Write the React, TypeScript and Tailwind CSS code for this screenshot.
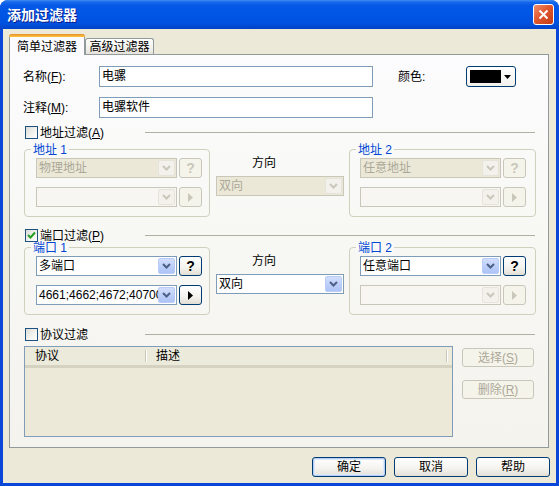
import React from "react";

const font = "font-[family-name:Liberation_Sans,Noto_Sans_CJK_SC,sans-serif]";

const Chevron = ({ color }: { color: string }) => (
  <svg width="9" height="6" viewBox="0 0 9 6">
    <path d="M1 1 L4.5 4.5 L8 1" fill="none" stroke={color} strokeWidth="2" />
  </svg>
);

const Checkbox = ({ checked = false }: { checked?: boolean }) => (
  <div className="w-[13px] h-[13px] shrink-0 border border-[#1C5180] bg-[linear-gradient(135deg,#DCDCD7_0%,#F4F4F0_60%,#FFFFFF_100%)] flex items-center justify-center">
    {checked && (
      <svg width="9" height="9" viewBox="0 0 9 9">
        <path d="M1 4 L3.5 6.5 L8 1.5" fill="none" stroke="#21A121" strokeWidth="2" />
      </svg>
    )}
  </div>
);

const Combo = ({
  text = "",
  state,
  className,
}: {
  text?: string;
  state: "on" | "off" | "offBeige";
  className: string;
}) => {
  const on = state === "on";
  const box = on
    ? "border-[#7F9DB9] bg-white text-black"
    : state === "offBeige"
      ? "border-[#C9C7BA] bg-[#EBE8D7] text-[#ACA899]"
      : "border-[#C9C7BA] bg-[#F7F6F2] text-[#ACA899]";
  return (
    <div className={`h-[20px] shrink-0 border p-px flex items-stretch ${box} ${className}`}>
      <div className="flex-1 min-w-0 overflow-hidden whitespace-nowrap pl-[1px] leading-[16px] text-[12px]">
        {text}
      </div>
      <div
        className={`w-[17px] rounded-[2px] border flex items-center justify-center ${
          on
            ? "border-[#B9CCF8] bg-[linear-gradient(180deg,#D2DEFC_0%,#BACDF9_60%,#AFC4F6_100%)]"
            : "border-[#E6E4DA] bg-[#F2F1EB]"
        }`}
      >
        <Chevron color={on ? "#4D6185" : "#C9C7BA"} />
      </div>
    </div>
  );
};

const SmallBtn = ({ kind, on }: { kind: "q" | "arrow"; on: boolean }) => (
  <div
    className={`ml-[2px] w-[23px] h-[20px] shrink-0 rounded-[3px] border flex items-center justify-center ${
      on
        ? "border-[#003C74] bg-[linear-gradient(180deg,#FFFFFF_0%,#F3F2EE_60%,#E1DED3_100%)]"
        : "border-[#C9C7BA] bg-[#F5F4EA]"
    }`}
  >
    {kind === "q" ? (
      <span className={`text-[14px] font-bold leading-none ${on ? "text-black" : "text-[#C9C7BA]"}`}>?</span>
    ) : (
      <svg width="5" height="9" viewBox="0 0 5 9">
        <path d="M0 0 L5 4.5 L0 9 Z" fill={on ? "#000" : "#C9C7BA"} />
      </svg>
    )}
  </div>
);

const Group = ({
  title,
  className,
  pl,
  children,
}: {
  title: string;
  className: string;
  pl: string;
  children: React.ReactNode;
}) => (
  <div className={`relative h-[68px] shrink-0 rounded-[4px] border border-[#D0D0BF] ${className}`}>
    <span className="absolute left-[6px] -top-[5px] px-[2px] bg-[#F9F9F7] text-[#0046D5] text-[12px] leading-[11px]">
      {title}
    </span>
    <div className={`pt-[8px] ${pl} flex flex-col gap-[9px]`}>{children}</div>
  </div>
);

const CheckRow = ({ label, checked = false, mt }: { label: React.ReactNode; checked?: boolean; mt: string }) => (
  <div className={`${mt} h-[13px] flex items-center pl-[15px]`}>
    <Checkbox checked={checked} />
    <div className="w-[107px] pl-[2px] text-[12px] leading-[12px] whitespace-nowrap">{label}</div>
    <div className="flex-1 mr-[13px] h-px bg-[#B2B0A2]" />
  </div>
);

const DirCol = ({ on }: { on: boolean }) => (
  <div className="ml-[6px] w-[128px] shrink-0 flex flex-col">
    <div className="pt-[7px] pl-[36px] text-[12px] leading-[14px]">方向</div>
    <Combo className="mt-[6px] w-[128px]" text="双向" state={on ? "on" : "offBeige"} />
  </div>
);

const Button = ({ label, def = false }: { label: string; def?: boolean }) => (
  <div
    className={`w-[74px] h-[20px] rounded-[3px] border border-[#003C74] flex items-center justify-center text-[12px] bg-[linear-gradient(180deg,#FFFFFF_0%,#F5F4F0_55%,#E3E0D6_100%)] ${
      def ? "shadow-[inset_0_0_0_1px_#B6CEF4,inset_0_0_0_2px_#DDE8FA]" : ""
    }`}
  >
    {label}
  </div>
);

const DisabledBtn = ({ children, mt }: { children: React.ReactNode; mt: string }) => (
  <div
    className={`${mt} w-[72px] h-[19px] rounded-[3px] border border-[#C9C7BA] bg-[#F5F4EA] text-[#ACA899] text-[12px] flex items-center justify-center`}
  >
    {children}
  </div>
);

export default function App() {
  return (
    <div className={`w-[559px] h-[486px] flex flex-col bg-[#0A46D8] rounded-t-[8px] overflow-hidden text-black ${font}`}>
      {/* title bar */}
      <div className="h-[29px] shrink-0 flex items-center pl-[7px] pr-[5px] bg-[linear-gradient(180deg,#3D8CF5_0%,#1467EA_8%,#0558E6_20%,#0055E5_55%,#0051DE_82%,#0043C6_100%)]">
        <span className="text-white text-[14px] font-bold leading-none [text-shadow:1px_1px_0_#0A1A88]">
          添加过滤器
        </span>
        <div className="ml-auto w-[21px] h-[21px] rounded-[3px] border border-white bg-[linear-gradient(135deg,#F0906E_0%,#E0582F_45%,#C63C14_100%)] flex items-center justify-center">
          <svg width="11" height="11" viewBox="0 0 11 11">
            <path d="M1.5 1.5 L9.5 9.5 M9.5 1.5 L1.5 9.5" stroke="#fff" strokeWidth="2" />
          </svg>
        </div>
      </div>

      {/* client area */}
      <div className="flex-1 mx-[3px] mb-[3px] bg-[#ECE9D8] flex flex-col">
        {/* tabs */}
        <div className="h-[25px] pl-[6px] flex items-end">
          <div className="relative z-10 -mb-px w-[76px] h-[21px] rounded-t-[3px] border-x border-[#919B9C] bg-[#FCFCFE] flex flex-col">
            <div className="h-[3px] -mx-px rounded-t-[3px] bg-[linear-gradient(180deg,#E68B2C_0%,#FFC73C_100%)]" />
            <div className="flex-1 flex items-center justify-center text-[12px] leading-none pt-[1px]">简单过滤器</div>
          </div>
          <div className="w-[69px] h-[16px] rounded-t-[3px] border-x border-t border-[#919B9C] bg-[linear-gradient(180deg,#FFFFFF_0%,#F2F1EC_60%,#E4E2D9_100%)] flex items-center justify-center text-[12px] leading-none">
            高级过滤器
          </div>
        </div>

        {/* panel */}
        <div className="ml-[6px] w-[540px] h-[394px] border border-[#919B9C] bg-[linear-gradient(180deg,#FCFCFE_0%,#F8F8F5_40%,#F4F3EE_100%)] flex flex-col">
          <div className="mt-[11px] h-[21px] flex items-center">
            <div className="w-[89px] pl-[13px] text-[12px]">
              名称(<u>F</u>):
            </div>
            <div className="w-[274px] h-[21px] border border-[#7F9DB9] bg-white px-[2px] text-[12px] leading-[18px]">电骡</div>
            <div className="ml-[25px] w-[68px] text-[12px]">颜色:</div>
            <div className="w-[50px] h-[21px] rounded-[3px] border border-[#003C74] bg-[linear-gradient(180deg,#FFFFFF_0%,#F2F1EC_100%)] flex items-center pl-[3px]">
              <div className="w-[31px] h-[13px] bg-black" />
              <svg className="ml-[3px]" width="7" height="4" viewBox="0 0 7 4">
                <path d="M0 0 L7 0 L3.5 4 Z" fill="#000" />
              </svg>
            </div>
          </div>

          <div className="mt-[10px] h-[21px] flex items-center">
            <div className="w-[89px] pl-[13px] text-[12px]">
              注释(<u>M</u>):
            </div>
            <div className="w-[274px] h-[21px] border border-[#7F9DB9] bg-white px-[2px] text-[12px] leading-[18px]">电骡软件</div>
          </div>

          <CheckRow mt="mt-[8px]" label={<>地址过滤(<u>A</u>)</>} />

          <div className="mt-[10px] pl-[14px] flex">
            <Group title="地址 1" className="w-[186px]" pl="pl-[11px]">
              <div className="flex">
                <Combo className="w-[141px]" text="物理地址" state="offBeige" />
                <SmallBtn kind="q" on={false} />
              </div>
              <div className="flex">
                <Combo className="w-[141px]" state="off" />
                <SmallBtn kind="arrow" on={false} />
              </div>
            </Group>
            <DirCol on={false} />
            <Group title="地址 2" className="ml-[5px] w-[187px]" pl="pl-[10px]">
              <div className="flex">
                <Combo className="w-[141px]" text="任意地址" state="offBeige" />
                <SmallBtn kind="q" on={false} />
              </div>
              <div className="flex">
                <Combo className="w-[141px]" state="off" />
                <SmallBtn kind="arrow" on={false} />
              </div>
            </Group>
          </div>

          <CheckRow mt="mt-[12px]" checked label={<>端口过滤(<u>P</u>)</>} />

          <div className="mt-[5px] pl-[14px] flex">
            <Group title="端口 1" className="w-[186px]" pl="pl-[11px]">
              <div className="flex">
                <Combo className="w-[141px]" text="多端口" state="on" />
                <SmallBtn kind="q" on />
              </div>
              <div className="flex">
                <Combo className="w-[141px]" text="4661;4662;4672;40700" state="on" />
                <SmallBtn kind="arrow" on />
              </div>
            </Group>
            <DirCol on />
            <Group title="端口 2" className="ml-[5px] w-[187px]" pl="pl-[10px]">
              <div className="flex">
                <Combo className="w-[141px]" text="任意端口" state="on" />
                <SmallBtn kind="q" on />
              </div>
              <div className="flex">
                <Combo className="w-[141px]" state="off" />
                <SmallBtn kind="arrow" on={false} />
              </div>
            </Group>
          </div>

          <CheckRow mt="mt-[13px]" label="协议过滤" />

          <div className="mt-[5px] pl-[14px] flex">
            <div className="w-[429px] h-[91px] border border-[#7F9DB9] bg-[#ECE9D8] flex flex-col">
              <div className="h-[21px] flex items-stretch bg-[#EBEADB] border-b-[3px] border-[#D6D2C2] text-[12px]">
                <div className="w-[120px] pl-[10px] flex items-center">协议</div>
                <div className="w-[2px] my-[3px] bg-[#FFFFFF] border-l border-[#CBC7B8]" />
                <div className="w-[299px] pl-[9px] flex items-center">描述</div>
                <div className="w-[2px] my-[3px] bg-[#FFFFFF] border-l border-[#CBC7B8]" />
              </div>
            </div>
            <div className="ml-[9px] flex flex-col">
              <DisabledBtn mt="mt-[2px]">
                选择(<u>S</u>)
              </DisabledBtn>
              <DisabledBtn mt="mt-[13px]">
                删除(<u>R</u>)
              </DisabledBtn>
            </div>
          </div>
        </div>

        {/* bottom buttons */}
        <div className="mt-[9px] pr-[6px] flex justify-end gap-[8px]">
          <Button label="确定" def />
          <Button label="取消" />
          <Button label="帮助" />
        </div>
      </div>
    </div>
  );
}
